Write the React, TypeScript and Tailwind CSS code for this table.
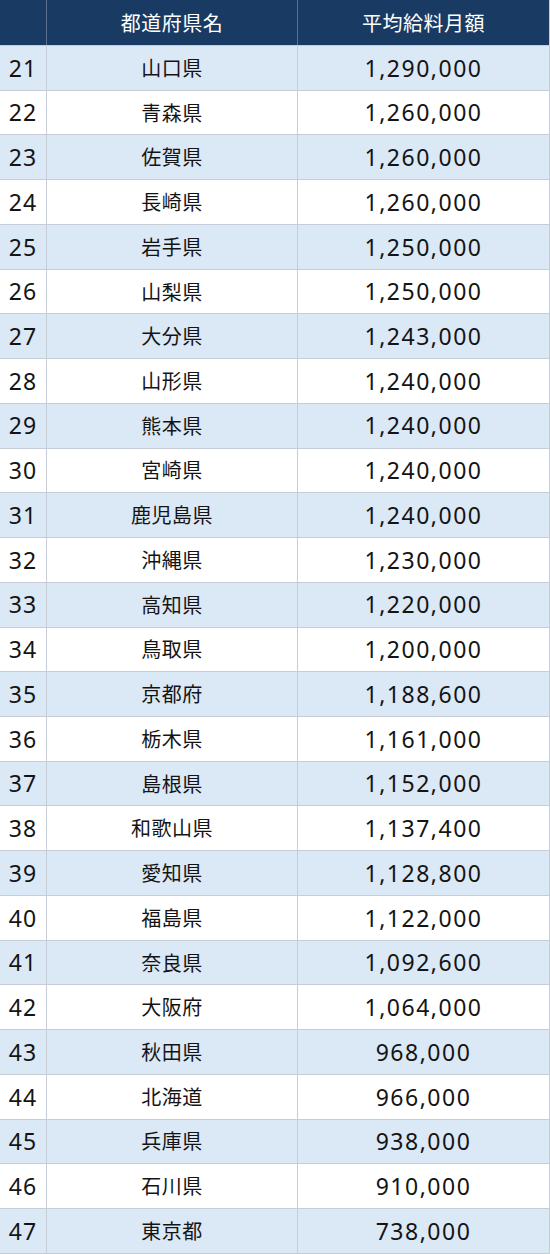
import React from "react";

const rows: [number, string, string][] = [
  [21, "山口県", "1,290,000"],
  [22, "青森県", "1,260,000"],
  [23, "佐賀県", "1,260,000"],
  [24, "長崎県", "1,260,000"],
  [25, "岩手県", "1,250,000"],
  [26, "山梨県", "1,250,000"],
  [27, "大分県", "1,243,000"],
  [28, "山形県", "1,240,000"],
  [29, "熊本県", "1,240,000"],
  [30, "宮崎県", "1,240,000"],
  [31, "鹿児島県", "1,240,000"],
  [32, "沖縄県", "1,230,000"],
  [33, "高知県", "1,220,000"],
  [34, "鳥取県", "1,200,000"],
  [35, "京都府", "1,188,600"],
  [36, "栃木県", "1,161,000"],
  [37, "島根県", "1,152,000"],
  [38, "和歌山県", "1,137,400"],
  [39, "愛知県", "1,128,800"],
  [40, "福島県", "1,122,000"],
  [41, "奈良県", "1,092,600"],
  [42, "大阪府", "1,064,000"],
  [43, "秋田県", "968,000"],
  [44, "北海道", "966,000"],
  [45, "兵庫県", "938,000"],
  [46, "石川県", "910,000"],
  [47, "東京都", "738,000"],
];

export default function App() {
  return (
    <div className="w-[550px] h-[1254px] flex flex-col bg-white text-[#141414]">
      <div className="h-[46px] shrink-0 flex bg-[#193b63] text-white border-b border-[#c6cdd6]">
        <div className="w-[47px] shrink-0 border-r border-[#5a7090]" />
        <div className="w-[251px] shrink-0 border-r border-[#5a7090] flex items-center justify-center text-[20px] tracking-[0.5px] font-['Noto_Sans_CJK_JP','Noto_Sans',sans-serif]">
          都道府県名
        </div>
        <div className="flex-1 border-r border-[#c6cdd6] flex items-center justify-center text-[20px] tracking-[0.5px] font-['Noto_Sans_CJK_JP','Noto_Sans',sans-serif]">
          平均給料月額
        </div>
      </div>
      {rows.map(([rank, pref, amount], i) => (
        <div
          key={rank}
          className={`flex-1 flex border-b border-[#c6cdd6] ${i % 2 === 0 ? "bg-[#dbe8f6]" : "bg-white"}`}
        >
          <div className="w-[47px] shrink-0 border-r border-[#c6cdd6] flex items-center justify-center text-[23px] tracking-[1px] font-['Noto_Sans','Noto_Sans_CJK_JP',sans-serif]">
            {rank}
          </div>
          <div className="w-[251px] shrink-0 border-r border-[#c6cdd6] flex items-center justify-center text-[20px] tracking-[0.5px] font-['Noto_Sans_CJK_JP','Noto_Sans',sans-serif]">
            {pref}
          </div>
          <div className="flex-1 border-r border-[#c6cdd6] flex items-center justify-center text-[23px] tracking-[1.5px] font-['Noto_Sans','Noto_Sans_CJK_JP',sans-serif]">
            {amount}
          </div>
        </div>
      ))}
    </div>
  );
}
